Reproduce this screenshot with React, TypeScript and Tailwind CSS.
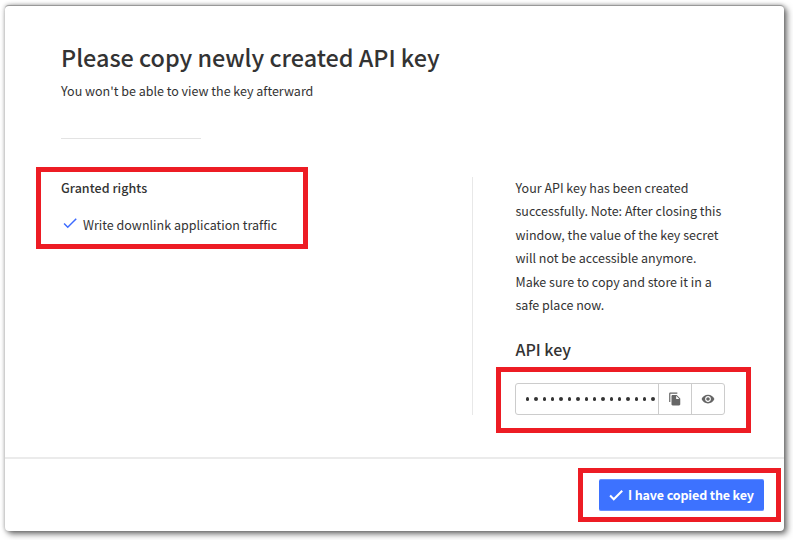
import { MdFileCopy, MdVisibility } from "react-icons/md";

function Highlight({ className }: { className: string }) {
  return <span aria-hidden="true" className={`pointer-events-none absolute border-5 border-[#ed1c24] ${className}`} />;
}

function Check({ className, weight }: { className: string; weight: number }) {
  return (
    <svg viewBox="0 0 24 24" fill="none" stroke="currentColor" strokeWidth={weight} className={className}>
      <path d="M4.1 12.7 9 17.6 20.3 6.3" />
    </svg>
  );
}

function Header() {
  return (
    <header>
      <h1 className="h-9 w-fit text-[23.4px] leading-9 font-medium tracking-[-0.02px] whitespace-nowrap">Please copy newly created API key</h1>
      <p className="mt-[6px] w-fit text-[12.5px] leading-5 whitespace-nowrap">You won't be able to view the key afterward</p>
      <hr className="mt-[37px] w-[140px] border-[#e3e3e3]" />
    </header>
  );
}

function Rights() {
  return (
    <section className="relative w-[412px] border-r border-[#e8e8e8]">
      <Highlight className="-top-[10px] -left-[25px] h-[82px] w-[272px]" />
      <h2 className="w-fit text-[12.5px] leading-[22px] font-medium tracking-[0.05px]">Granted rights</h2>
      <div className="mt-[15px] flex h-[22px] items-center text-[12.5px]">
        <Check weight={2} className="mr-1 mb-1 size-[18px] text-[#3d6bff]" />
        <span className="leading-[22px] tracking-[0.01px] whitespace-nowrap">Write downlink application traffic</span>
      </div>
    </section>
  );
}

const notice = [
  "Your API key has been created",
  "successfully. Note: After closing this",
  "window, the value of the key secret",
  "will not be accessible anymore.",
  "Make sure to copy and store it in a",
  "safe place now.",
];

function KeyPanel() {
  return (
    <section className="-mt-[1px] ml-[42px] w-[210px]">
      <div className="pl-[0.5px] text-[12.5px] leading-[23.4px] whitespace-nowrap">
        {notice.map((line) => (
          <p key={line} className="w-fit">{line}</p>
        ))}
      </div>
      <h2 className="mt-[20.6px] h-6 w-fit pl-[0.5px] text-[16px] leading-6 font-medium">API key</h2>
      <div className="relative mt-[22px] flex h-8 rounded-[3px] border border-[#ccc]">
        <Highlight className="-top-[17px] -left-[20px] h-[66px] w-[255px]" />
        <div className="flex w-[142px] items-center justify-between pr-[3px] pl-[10px]">
          {Array.from({ length: 16 }, (_, i) => (
            <i key={i} className="size-[3.4px] rounded-full bg-[#333]" />
          ))}
        </div>
        <button className="flex w-[33px] items-center justify-center border-l border-[#ccc]">
          <MdFileCopy className="size-[14px] text-[#666]" />
        </button>
        <button className="flex w-[33px] items-center justify-center border-l border-[#ccc]">
          <MdVisibility className="size-[14px] text-[#666]" />
        </button>
      </div>
    </section>
  );
}

export default function App() {
  return (
    <main className="h-[540px] w-[793px] overflow-hidden bg-white pt-[5px] pl-[5px] font-['Noto_Sans_CJK_SC','Noto_Sans',sans-serif] text-[#333]">
      <div className="flex h-[526px] w-[779px] flex-col rounded-[4px] border-t border-[#999] bg-white shadow-[3px_3px_6px_0px_rgba(0,0,0,0.55),0px_0px_4px_0px_rgba(0,0,0,0.3)]">
        <div className="-mt-px h-[452px] px-14 pt-[34px]">
          <Header />
          <div className="mt-[38px] flex h-[238px]">
            <Rights />
            <KeyPanel />
          </div>
        </div>
        <footer className="flex flex-1 items-start justify-end border-t-2 border-[#ebebeb] pt-5 pr-5">
          <div className="relative">
            <Highlight className="-top-[11px] -left-[21px] h-[54px] w-[203px]" />
            <button className="flex h-8 w-[165px] items-center rounded-[2px] border-t border-b border-[#6790ff] bg-[#3d72ff] pl-[8px] text-[12.5px] font-bold text-white">
              <Check weight={2.7} className="mr-[3px] size-[18px]" />
              <span className="tracking-[-0.13px] whitespace-nowrap">I have copied the key</span>
            </button>
          </div>
        </footer>
      </div>
    </main>
  );
}
